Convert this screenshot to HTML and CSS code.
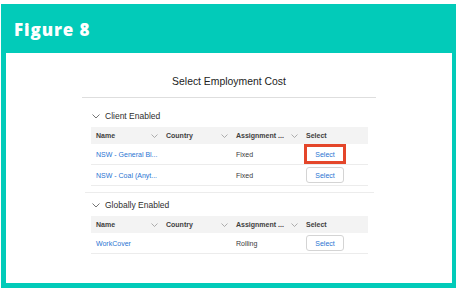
FILE: index.html
```html
<!DOCTYPE html>
<html>
<head>
<meta charset="utf-8">
<link rel="stylesheet" href="styles.css">
</head>
<body>
<div class="frame">
  <div class="header">Figure 8</div>
  <div class="panel">
    <div class="dialog">
      <div class="title">Select Employment Cost</div>

      <div class="section">
        <div class="sec-head">
          <svg class="sec-chev" width="8" height="5" viewBox="0 0 8 5"><polyline points="0.5,0.5 4,4 7.5,0.5" fill="none" stroke="#666" stroke-width="0.9"/></svg>
          <span>Client Enabled</span>
        </div>
        <div class="table">
          <div class="row head">
            <div class="cell">Name<svg class="chev" width="7" height="4" viewBox="0 0 7 4"><polyline points="0.5,0.5 3.5,3.5 6.5,0.5" fill="none" stroke="#999" stroke-width="0.8"/></svg></div>
            <div class="cell">Country<svg class="chev" width="7" height="4" viewBox="0 0 7 4"><polyline points="0.5,0.5 3.5,3.5 6.5,0.5" fill="none" stroke="#999" stroke-width="0.8"/></svg></div>
            <div class="cell">Assignment ...<svg class="chev" width="7" height="4" viewBox="0 0 7 4"><polyline points="0.5,0.5 3.5,3.5 6.5,0.5" fill="none" stroke="#999" stroke-width="0.8"/></svg></div>
            <div class="cell">Select</div>
          </div>
          <div class="row">
            <div class="cell link">NSW - General Bl...</div>
            <div class="cell"></div>
            <div class="cell">Fixed</div>
            <div class="cell"><span class="btn hl">Select</span></div>
          </div>
          <div class="row">
            <div class="cell link">NSW - Coal (Anyt...</div>
            <div class="cell"></div>
            <div class="cell">Fixed</div>
            <div class="cell"><span class="btn">Select</span></div>
          </div>
        </div>
      </div>

      <div class="section second">
        <div class="sec-head">
          <svg class="sec-chev" width="8" height="5" viewBox="0 0 8 5"><polyline points="0.5,0.5 4,4 7.5,0.5" fill="none" stroke="#666" stroke-width="0.9"/></svg>
          <span>Globally Enabled</span>
        </div>
        <div class="table">
          <div class="row head">
            <div class="cell">Name<svg class="chev" width="7" height="4" viewBox="0 0 7 4"><polyline points="0.5,0.5 3.5,3.5 6.5,0.5" fill="none" stroke="#999" stroke-width="0.8"/></svg></div>
            <div class="cell">Country<svg class="chev" width="7" height="4" viewBox="0 0 7 4"><polyline points="0.5,0.5 3.5,3.5 6.5,0.5" fill="none" stroke="#999" stroke-width="0.8"/></svg></div>
            <div class="cell">Assignment ...<svg class="chev" width="7" height="4" viewBox="0 0 7 4"><polyline points="0.5,0.5 3.5,3.5 6.5,0.5" fill="none" stroke="#999" stroke-width="0.8"/></svg></div>
            <div class="cell">Select</div>
          </div>
          <div class="row">
            <div class="cell link">WorkCover</div>
            <div class="cell"></div>
            <div class="cell">Rolling</div>
            <div class="cell"><span class="btn">Select</span></div>
          </div>
        </div>
      </div>
    </div>
  </div>
</div>
</body>
</html>
```

FILE: styles.css
```css
html, body {
  margin: 0;
  padding: 0;
  background: #ffffff;
}

.frame {
  margin: 4px 0 0 1px;
  width: 455px;
  height: 284px;
  box-sizing: border-box;
  background: #02cbb9;
  padding: 0 4px 5px 5px;
  display: flex;
  flex-direction: column;
}

.header {
  height: 49px;
  box-sizing: border-box;
  padding: 16px 0 0 8px;
  font-family: "Open Sans", sans-serif;
  font-weight: 800;
  font-size: 17px;
  line-height: 20px;
  letter-spacing: 0.9px;
  color: #ffffff;
}

.panel {
  flex: 1;
  background: #ffffff;
  padding-top: 22px;
}

.dialog {
  width: 294px;
  margin: 0 auto;
  font-family: "Liberation Sans", Arial, sans-serif;
  color: #3a3a3a;
}

.title {
  text-align: center;
  font-size: 10.4px;
  line-height: 14px;
  padding-bottom: 8px;
  border-bottom: 1px solid #dedede;
  color: #222;
}

.section {
  padding: 12px 8px 6px 9px;
}

.section.second {
  margin: 0 2px 0 3px;
  padding: 6px 6px 0 6px;
  border-top: 1px solid #ececec;
}

.sec-head {
  display: flex;
  align-items: center;
  height: 12px;
  margin-bottom: 5px;
  font-size: 8.5px;
  color: #2e2e2e;
}

.sec-chev {
  margin: 0 5px 0 1px;
}

.table {
  font-size: 7px;
}

.row {
  display: grid;
  grid-template-columns: 70px 70px 70px 67px;
  height: 21px;
  border-bottom: 1px solid #ececec;
  box-sizing: border-box;
  align-items: center;
}

.row.head {
  height: 17px;
  background: #f3f3f3;
  border-bottom: none;
  font-weight: bold;
  color: #404040;
}

.cell {
  display: flex;
  align-items: center;
  justify-content: space-between;
  padding: 0 3px 0 5px;
  white-space: nowrap;
}

.chev {
  flex: none;
  margin-left: 2px;
}

.link {
  color: #2a74d2;
}

.btn {
  display: inline-flex;
  align-items: center;
  justify-content: center;
  width: 38px;
  height: 16px;
  box-sizing: border-box;
  border: 1px solid #d4d4d4;
  border-radius: 3px;
  color: #2a74d2;
  background: #fff;
}

.btn.hl {
  border-color: #e4462a;
  border-radius: 0;
  outline: 2px solid #e4462a;
}
```
